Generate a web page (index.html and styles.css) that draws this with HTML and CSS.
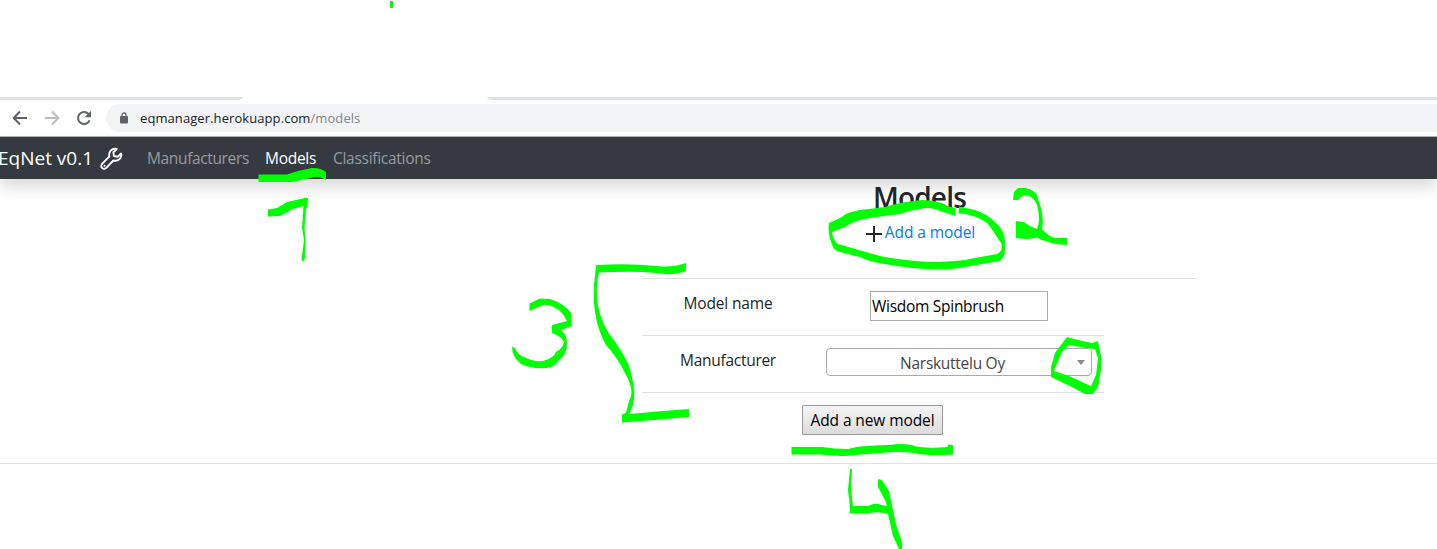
FILE: index.html
```html
<!DOCTYPE html>
<html lang="en">
<head>
<meta charset="utf-8">
<title>EqNet - Models</title>
<link rel="stylesheet" href="styles.css">
</head>
<body>
<div class="tabstrip"><span class="tab-left"></span><span class="tab-right"></span></div>
<div class="toolbar">
  <svg class="nav-icon" viewBox="0 0 16 16"><path d="M15 8H2M8 1.5 1.7 8 8 14.5" fill="none" stroke="#5f6368" stroke-width="2"/></svg>
  <svg class="nav-icon" viewBox="0 0 16 16"><path d="M1 8h13M8 1.5 14.3 8 8 14.5" fill="none" stroke="#babcbe" stroke-width="2"/></svg>
  <svg class="nav-icon" viewBox="0 0 16 16"><path d="M13.6 10.3A6 6 0 1 1 12.5 4" fill="none" stroke="#5f6368" stroke-width="2"/><path d="M15 .8v6.4H8.7z" fill="#5f6368"/></svg>
  <div class="address">
    <svg class="lock" viewBox="0 0 8 12"><path d="M2 5V3a2 2 0 0 1 4 0v2" fill="none" stroke="#5f6368" stroke-width="1.3"/><rect y="4" width="8" height="7.5" rx="1" fill="#5f6368"/></svg>
    <span class="url">eqmanager.herokuapp.com<span class="path">/models</span></span>
  </div>
</div>
<nav class="navbar">
  <span class="brand">EqNet v0.1</span>
  <svg class="wrench" viewBox="0 0 22 22"><path d="M16 1.900C11.200.6 7.800 5 9 9L2 16.200C-.3 19.500 3.400 22.300 6 20l6.800-7.100C17 14.200 21.400 10.800 20.200 6.200L16.900 9.300 13.300 8.600 12.800 5.200zM4.300 17.900h.1" fill="none" stroke="#fff" stroke-width="1.800" stroke-linecap="round" stroke-linejoin="round"/></svg>
  <a class="link manufacturers">Manufacturers</a>
  <a class="link active">Models</a>
  <a class="link classifications">Classifications</a>
</nav>
<main class="content">
  <h1 class="title">Models</h1>
  <div class="add">
    <svg class="plus" viewBox="0 0 16 16"><path d="M8 0v16M0 8h16" stroke="#212529" stroke-width="2"/></svg>
    <a class="add-link">Add a model</a>
  </div>
  <form class="form">
    <div class="row">
      <label class="label name-label">Model name</label>
      <div class="field"><div class="input"><span>Wisdom Spinbrush</span></div></div>
    </div>
    <div class="row ruled">
      <label class="label">Manufacturer</label>
      <div class="field"><div class="select"><span class="value">Narskuttelu Oy</span><span class="caret"></span></div></div>
    </div>
    <div class="actions ruled"><button type="button" class="submit">Add a new model</button></div>
  </form>
</main>
<div class="divider"></div>
<svg class="ink" viewBox="0 0 1437 549" fill="#0f0">
  <path d="M390 1h3v7h-3z"/>
  <path d="M258.500 174.500H287Q300 170 312 168 320 167.500 326 172V180Q320 176 313 177.500L292 182H258.500z"/>
  <path d="M268 209.500 277 208 287 202 305 198 308 198 307.500 206 306 210 304.500 228 305.500 240 305 258 303.500 261.500 301.500 260 304 240 302 228 303.500 206 293 209 280 216 268 216.500z"/>
  <path d="M955.500 208Q948 207 942 203 932 200 922 200 900 202 885 207L860 210Q847 212 840 218L829 223Q827 232 833 247 835 251 840 252L860 257Q870 262 885 264 910 269 940 269.500 955 269 965 267L1000 261Q1005 257 1005 250 1006 240 1003 232 1000 226 996 223 988 214 975 210L959 206.500 958.500 213Q968 214 976 217 988 221 993 231L1001 243Q1004 250 997 254 980 257 965 260 945 262 930 262 900 260 880 256L838 244Q833 240 832 232L845 227Q855 220 870 218L900 214Q912 210 925 208 935 208 940 211L955.500 216z"/>
  <path d="M1013 200 1014 192 1018 188 1026 188Q1034 190 1037 195L1041 208Q1044 220 1042 229 1048 236 1055 238H1067V245L1055 244 1042 240 1037 237.500Q1030 240 1016 238V221L1024 222Q1030 227 1037 229 1041 220 1037 205 1033 195 1024 195L1018 200z"/>
  <path d="M529.500 303.500 540 298.500 550 299Q565 304 571 313L572 326 561 330Q567 334 567 343 567 355 559 360 555 367 546 368 531 369 521 364 512 357 512 346.500L515 348Q518 355 524 357 533 362 543 361 554 358 556 352 563 348 564 342 561 336 552 333V325L567 321Q565 316 560 311 548 302 541 306L529.500 311z"/>
  <path d="M596 265Q630 263 657 266 672 268 686 263V271Q674 276 656 273 635 271 599 272.500 595 288 598 305 601 325 616 343 630 363 632 377 636 392 633 405L629.500 414Q660 411 689 409V417L655 420 622 422.500V414.500L626 413 629 401Q635 391 626 375 618 358 606 345 592 320 594 285z"/>
  <path fill-rule="evenodd" d="M1067 337 1078 340 1092 343 1098 341 1099 347 1101 355 1101 370 1098 387 1093 394 1085 394 1072 387 1051 377 1051 367 1055 353zM1069 345 1062 352 1054 371 1069 376 1091 386 1096 375 1098 358 1095 349 1086 348z"/>
  <path d="M791.500 447H822Q835 449 848 449 858 446 868 446 880 445 890 445 900 443 912 445 920 449 948 447V444.500L953 445V454.500Q928 456 914 453 900 451 880 453L855 455Q843 457 820 454.500H791.500z"/>
  <path d="M850 469 852 469 851 490 853 506 868 506Q876 502 881 505L887 506 885 500 878 487 878 479 882 480 889 491 896 524 902 542 902 549 899 549 893 536 888 514Q877 511 869 513.500H850V507L848 490z"/>
</svg>
</body>
</html>
```
FILE: styles.css
```css
* { box-sizing: border-box; }
body { margin: 0; padding-top: 97px; width: 1437px; height: 549px; overflow: hidden; position: relative; background: #fff; color: #212529; font: 15.5px/24px "Open Sans", "Noto Sans", sans-serif; letter-spacing: -.28px; }
.tabstrip { display: flex; justify-content: space-between; height: 3px; }
.tab-left { width: 243px; background: #dee1e6; border-bottom-right-radius: 5px 3px; }
.tab-right { width: 950px; background: #dee1e6; border-bottom-left-radius: 5px 3px; }
.toolbar { display: flex; align-items: center; height: 37px; padding-left: 12px; border-bottom: 1px solid #b4b5b8; }
.nav-icon { width: 16px; height: 16px; margin-right: 16px; flex: none; }
.address { display: flex; align-items: center; flex: 1; height: 28px; margin-left: -2px; padding-left: 14px; border-radius: 14px 0 0 14px; background: #f1f3f4; }
.lock { width: 8px; height: 12px; }
.url { margin-left: 12px; font-size: 13px; letter-spacing: .08px; color: #202124; white-space: nowrap; }
.path { color: #80868b; }
.navbar { display: flex; align-items: center; height: 42px; background: #343a40; box-shadow: 0 8px 16px rgba(0,0,0,.15); }
.brand { width: 101px; margin-left: -2px; font-size: 19px; letter-spacing: 0; color: #fff; white-space: nowrap; }
.wrench { width: 23px; height: 23px; flex: none; margin-left: 1px; }
.link { color: #999c9f; white-space: nowrap; margin-bottom: 1px; }
.manufacturers { width: 118px; margin-left: 24px; letter-spacing: -.36px; }
.active { width: 68px; color: #fff; }
.content { width: 555px; margin-left: 642px; }
.title { margin: 0; height: 40px; font-size: 28px; line-height: 36px; font-weight: 600; letter-spacing: -.8px; text-align: center; }
.add { display: flex; justify-content: center; align-items: center; height: 28px; padding-left: 2px; }
.plus { width: 16px; height: 16px; margin: 1px 3px 0 0; }
.add-link { color: #007bff; margin-bottom: 2px; letter-spacing: -.08px; }
.form { margin-top: 31px; border-top: 1px solid #dee2e6; }
.row { display: flex; width: 462px; height: 56px; padding-top: 12px; }
.ruled { border-top: 1px solid #dee2e6; width: 462px; }
.row.ruled { height: 57px; }
.label { width: 172px; text-align: center; }
.name-label { letter-spacing: -.15px; }
.field { width: 290px; display: flex; justify-content: center; align-items: flex-start; }
.input { width: 178px; height: 30px; padding-left: 1px; border: 1px solid #a9a9a9; color: #000; line-height: 29px; }
.select { position: relative; width: 266px; height: 28px; border: 1px solid #aaa; border-radius: 4px; color: #444; text-align: center; line-height: 28px; padding-right: 13px; }
.caret { position: absolute; right: 6px; top: 11px; border: solid transparent; border-width: 5px 4px 0; border-top-color: #888; }
.actions { height: 71px; padding: 12px 1px 0 0; display: flex; justify-content: center; }
.submit { width: 141px; height: 30px; padding: 0; border: 1px solid #999; border-radius: 1px; background: linear-gradient(#f5f5f5, #dcdcdc); font: inherit; letter-spacing: -.1px; color: #000; white-space: nowrap; }
.divider { height: 1px; background: #dee2e6; }
.ink { position: absolute; left: 0; top: 0; width: 1437px; height: 549px; pointer-events: none; }
```
